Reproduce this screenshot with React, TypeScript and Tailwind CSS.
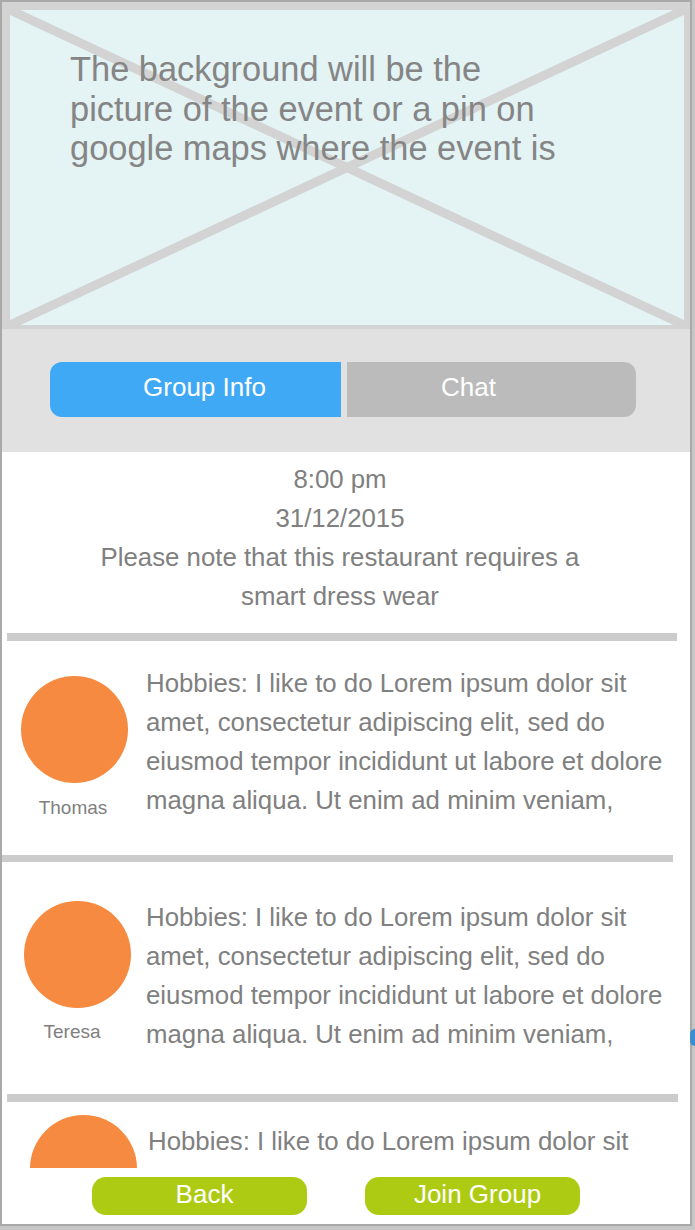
import React from "react"

const hobbyLines = [
  "Hobbies: I like to do Lorem ipsum dolor sit",
  "amet, consectetur adipiscing elit, sed do",
  "eiusmod tempor incididunt ut labore et dolore",
  "magna aliqua. Ut enim ad minim veniam,",
]

function Avatar({ name, nameClass }: { name?: string; nameClass?: string }) {
  return (
    <div className="flex w-[108px] shrink-0 flex-col items-center">
      <div className="h-[107px] w-[107px] shrink-0 rounded-full bg-[#f68a40]" />
      {name && <div className={`${nameClass} text-[19px] leading-[20px] text-[#808080]`}>{name}</div>}
    </div>
  )
}

function Hobbies({ lines }: { lines: string[] }) {
  return (
    <div className="text-[25.8px] leading-[39px] text-[#808080]">
      {lines.map((l) => (
        <div key={l} className="whitespace-nowrap">
          {l}
        </div>
      ))}
    </div>
  )
}

function Divider({ className }: { className: string }) {
  return <div className={`shrink-0 bg-[#cccccc] ${className}`} />
}

export default function App() {
  return (
    <div
      className="relative h-[1230px] w-[695px] overflow-hidden bg-[#c6c6c6]"
      style={{ fontFamily: '"Liberation Sans", Arial, sans-serif' }}
    >
      <div className="flex h-[1226px] w-[692px] flex-col overflow-hidden border-2 border-[#a9a9a9] bg-white">
        {/* event picture placeholder */}
        <div className="h-[327px] shrink-0 bg-[#d3d3d3] pb-[4px] pl-[8px] pr-[6px] pt-[8px]">
          <div className="relative h-full w-full bg-[#e4f3f4]">
            <svg className="absolute inset-0 h-full w-full" preserveAspectRatio="none" viewBox="0 0 100 100">
              <line x1="0" y1="0" x2="100" y2="100" stroke="#d3d3d3" strokeWidth="9" vectorEffect="non-scaling-stroke" />
              <line x1="100" y1="0" x2="0" y2="100" stroke="#d3d3d3" strokeWidth="9" vectorEffect="non-scaling-stroke" />
            </svg>
            <div className="relative pl-[60px] pt-[40px] text-[34.4px] leading-[39.5px] text-[#858585]">
              The background will be the
              <br />
              picture of the event or a pin on
              <br />
              google maps where the event is
            </div>
          </div>
        </div>

        {/* tabs */}
        <div className="flex h-[123px] shrink-0 gap-[6px] bg-[#e1e1e1] pl-[48px] pt-[33px]">
          <div className="flex h-[55px] w-[291px] items-center justify-center rounded-l-[12px] bg-[#3fa9f5] pb-[5px] pl-[18px] text-[26px] text-white">
            Group Info
          </div>
          <div className="flex h-[55px] w-[289px] items-center justify-center rounded-r-[12px] bg-[#bbbbbb] pb-[5px] pr-[46px] text-[26px] text-white">
            Chat
          </div>
        </div>

        {/* scrolling content */}
        <div className="flex min-h-0 flex-1 flex-col overflow-hidden">
          <div className="pr-[12px] pt-[8px] text-center text-[25.8px] leading-[39px] text-[#808080]">
            <div>8:00 pm</div>
            <div>31/12/2015</div>
            <div>Please note that this restaurant requires a</div>
            <div>smart dress wear</div>
          </div>

          <Divider className="ml-[5px] mt-[17px] h-[8px] w-[670px]" />
          <div className="flex h-[214px] shrink-0">
            <div className="ml-[18px] pt-[35px]">
              <Avatar name="Thomas" nameClass="mt-[15px] mr-[2px]" />
            </div>
            <div className="ml-[18px] pt-[23px]">
              <Hobbies lines={hobbyLines} />
            </div>
          </div>

          <Divider className="h-[7px] w-[671px]" />
          <div className="flex h-[232px] shrink-0">
            <div className="ml-[21px] pt-[39px]">
              <Avatar name="Teresa" nameClass="mt-[14px] mr-[10px]" />
            </div>
            <div className="ml-[15px] pt-[36px]">
              <Hobbies lines={hobbyLines} />
            </div>
          </div>

          <Divider className="ml-[5px] h-[8px] w-[671px]" />
          <div className="flex h-[66px] shrink-0 overflow-hidden">
            <div className="ml-[27px] pt-[13px]">
              <Avatar />
            </div>
            <div className="ml-[11px] pt-[20px]">
              <Hobbies lines={hobbyLines.slice(0, 1)} />
            </div>
          </div>
        </div>

        {/* footer buttons */}
        <div className="flex h-[56px] shrink-0 gap-[58px] bg-white pl-[90px] pt-[9px]">
          <div className="flex h-[38px] w-[215px] items-center justify-center rounded-[14px] bg-[#aecb13] pb-[3px] pl-[10px] text-[26px] text-white">
            Back
          </div>
          <div className="flex h-[38px] w-[215px] items-center justify-center rounded-[14px] bg-[#aecb13] pb-[3px] pl-[10px] text-[26px] text-white">
            Join Group
          </div>
        </div>
      </div>

      {/* sliver of something behind the frame */}
      <div className="absolute left-[690px] top-[1029px] h-[17px] w-[5px] rounded-l-full bg-[#3b8ed0]" />
    </div>
  )
}
